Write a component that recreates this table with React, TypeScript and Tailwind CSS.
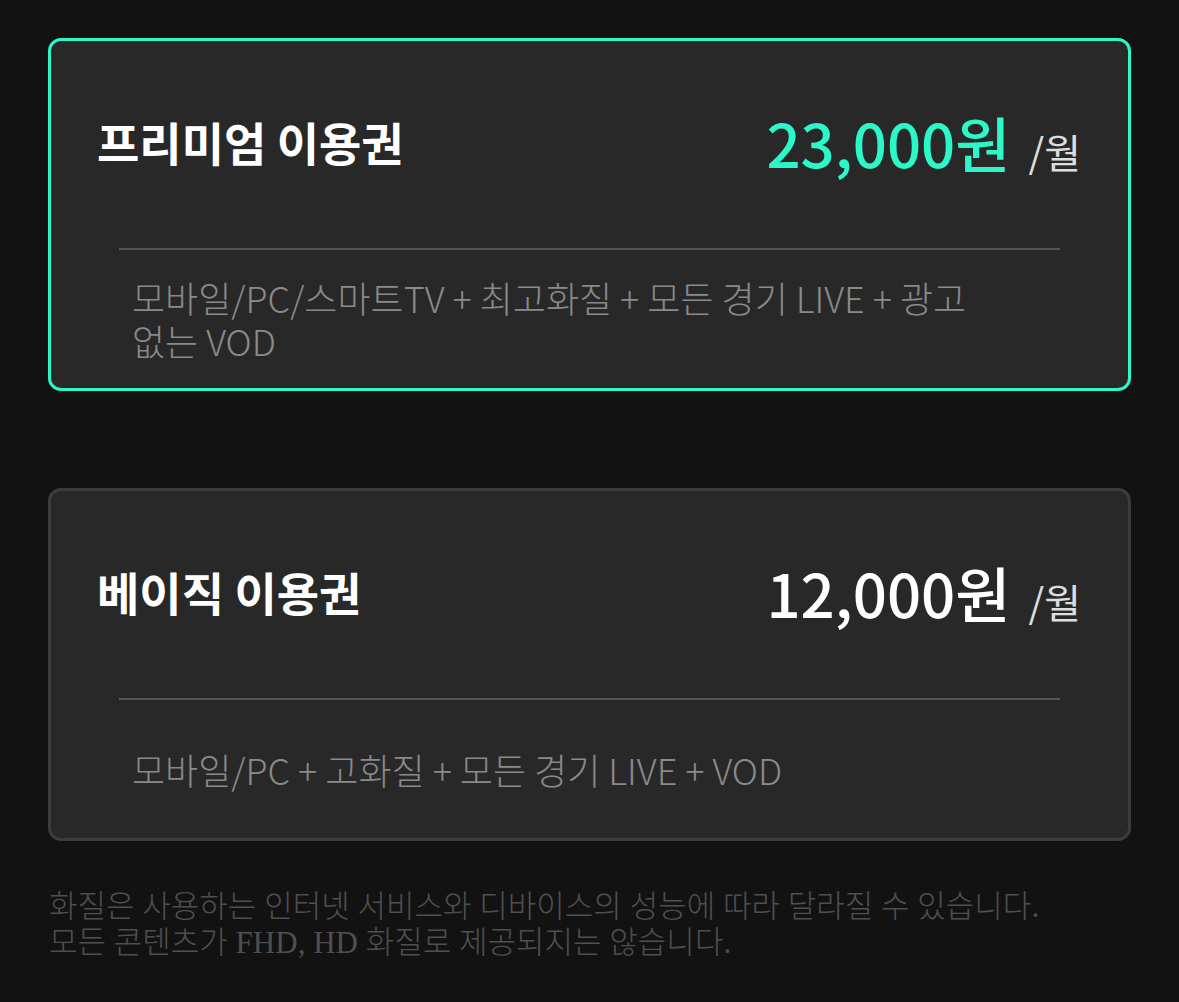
import React from 'react'

const plans = [
  {
    name: '프리미엄 이용권',
    price: '23,000원',
    desc: '모바일/PC/스마트TV + 최고화질 + 모든 경기 LIVE + 광고 없는 VOD',
    active: true,
  },
  {
    name: '베이직 이용권',
    price: '12,000원',
    desc: '모바일/PC + 고화질 + 모든 경기 LIVE + VOD',
    active: false,
  },
]

const PlanCard = ({ plan }: { plan: (typeof plans)[number] }) => {
  return (
    <div
      className={
        plan.active
          ? 'flex h-[353px] flex-col rounded-[13px] border-[3px] border-[#2cf7c8] bg-[#282828]'
          : 'flex h-[353px] flex-col rounded-[13px] border-[3px] border-[#3c3c3c] bg-[#282828]'
      }
    >
      <div className="flex h-[207px] items-center justify-between pb-[6px] pl-[46px] pr-[47px]">
        <h2 className="text-[46px] font-bold text-white">{plan.name}</h2>
        <div className="flex items-baseline">
          <span
            className={
              plan.active
                ? 'text-[60px] font-medium text-[#2cf7c8]'
                : 'text-[60px] font-medium text-white'
            }
          >
            {plan.price}
          </span>
          <span className="ml-[18px] text-[40px] text-[#dddddd]">/월</span>
        </div>
      </div>
      <div className="mx-[68px] h-[2px] bg-[#555555]" />
      <div className="flex flex-1 items-center pl-[81px] pr-[127px]">
        <p className="break-keep text-[36px] font-light leading-[43px] text-[#8a8a8a]">{plan.desc}</p>
      </div>
    </div>
  )
}

const App = () => {
  return (
    <div
      className="min-h-screen bg-[#121212] px-[48px] pt-[38px]"
      style={{ fontFamily: '"Noto Sans CJK KR", "Noto Sans", sans-serif' }}
    >
      <div className="flex flex-col gap-[97px]">
        {plans.map((p) => (
          <PlanCard key={p.name} plan={p} />
        ))}
      </div>
      <p
        className="mt-[48px] pl-[1px] text-[31px] font-light leading-[36px] text-[#4f4f4f]"
        style={{ fontFamily: '"Liberation Serif", "Noto Sans CJK KR", serif' }}
      >
        화질은 사용하는 인터넷 서비스와 디바이스의 성능에 따라 달라질 수 있습니다.
        <br />
        모든 콘텐츠가 FHD, HD 화질로 제공되지는 않습니다.
      </p>
    </div>
  )
}

export default App
